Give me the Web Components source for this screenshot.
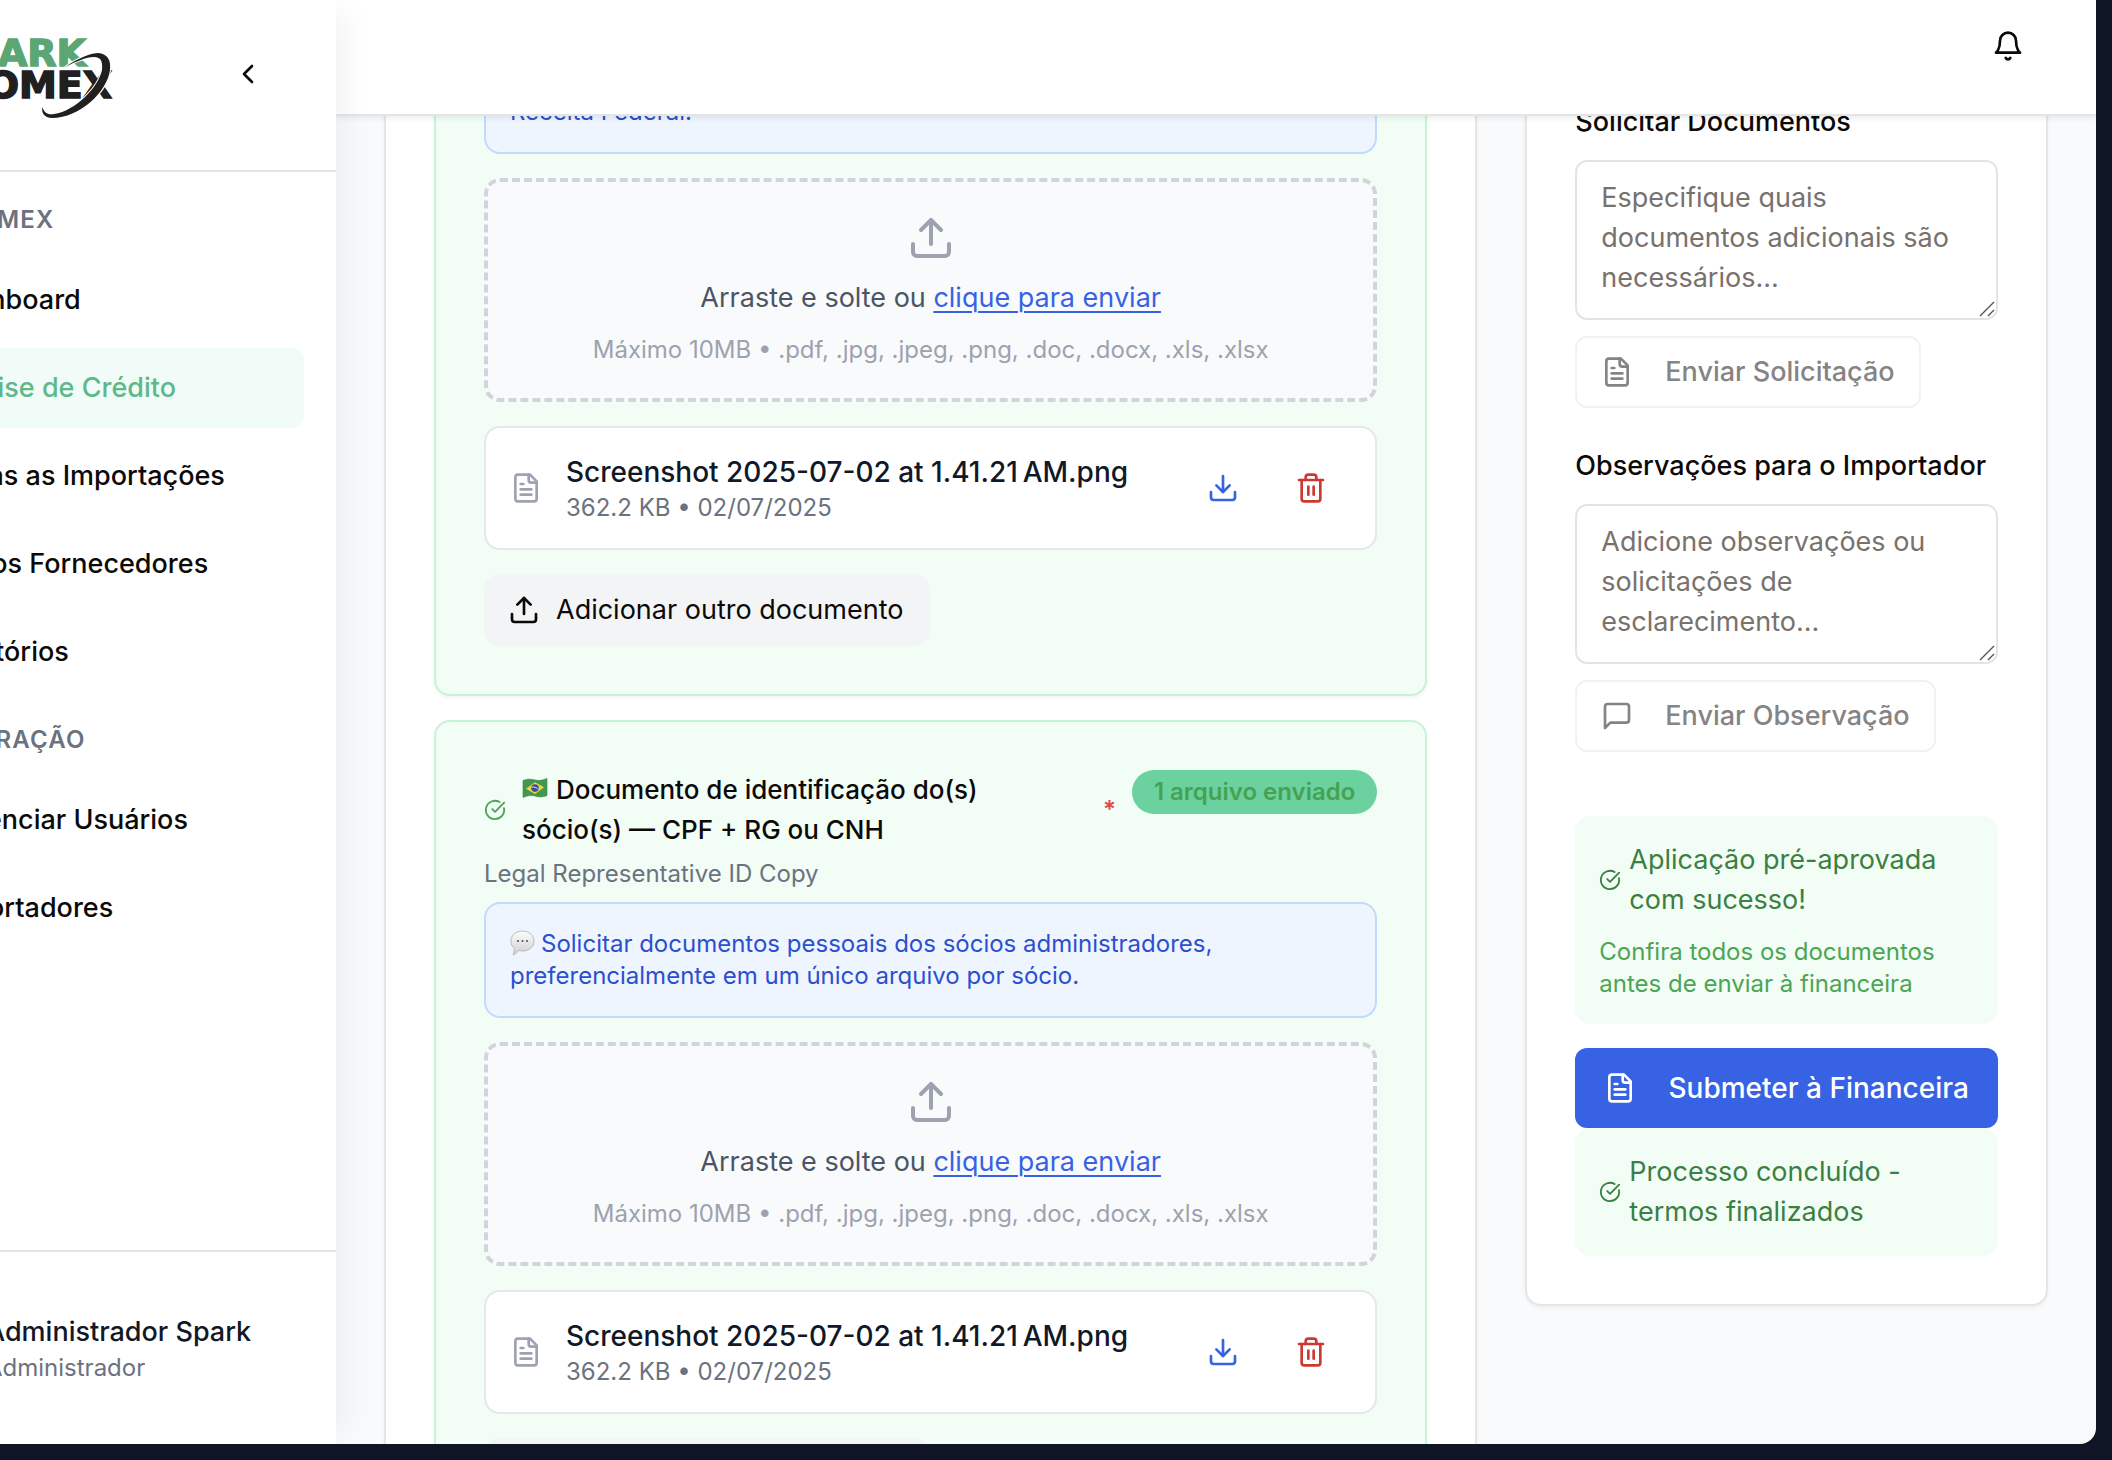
<!DOCTYPE html>
<html lang="pt-BR">
<head>
<meta charset="utf-8">
<title>Spark Comex — Análise de Crédito</title>
<style>
  :root {
    --font: Inter, "Liberation Sans", sans-serif;
    --text: 27px;
    --strong: 28px;
    --small: 24px;
    --ink: #0c0a09;
    --line: #e5e5e5;
    --canvas: #f9fafc;
    --mint: #f2fdf5;
  }
  html, body { height: 100%; margin: 0; }
  body {
    background: #0f1524; color: var(--ink); overflow: hidden;
    font: 400 var(--text)/40px var(--font);
    -webkit-font-smoothing: antialiased;
  }
</style>
</head>
<body>
<spark-app>
  <app-sidebar slot="sidebar">
    <nav-section label="SPARK COMEX">
      <nav-link>Dashboard</nav-link>
      <nav-link active>Análise de Crédito</nav-link>
      <nav-link>Todas as Importações</nav-link>
      <nav-link>Novos Fornecedores</nav-link>
      <nav-link>Relatórios</nav-link>
    </nav-section>
    <nav-section label="ADMINISTRAÇÃO">
      <nav-link>Gerenciar Usuários</nav-link>
      <nav-link>Importadores</nav-link>
    </nav-section>
    <user-card slot="user" name="Administrador Spark" role-name="Administrador"></user-card>
  </app-sidebar>
  <app-topbar slot="topbar"></app-topbar>

  <doc-list slot="main">
    <doc-card continued>
      <hint-note slot="note">Receita Federal.</hint-note>
      <drop-zone></drop-zone>
      <file-row name="Screenshot 2025-07-02 at 1.41.21&#8239;AM.png" meta="362.2 KB • 02/07/2025"></file-row>
      <add-button>Adicionar outro documento</add-button>
    </doc-card>
    <doc-card>
      <doc-heading slot="heading" subtitle="Legal Representative ID Copy" badge="1 arquivo enviado">Documento de identificação do(s)<br>sócio(s) — CPF + RG ou CNH</doc-heading>
      <hint-note slot="note" bubble>Solicitar documentos pessoais dos sócios administradores, preferencialmente em um único arquivo por sócio.</hint-note>
      <drop-zone></drop-zone>
      <file-row name="Screenshot 2025-07-02 at 1.41.21&#8239;AM.png" meta="362.2 KB • 02/07/2025"></file-row>
      <add-button></add-button>
    </doc-card>
  </doc-list>

  <review-panel slot="aside">
    <request-field label="Solicitar Documentos" placeholder="Especifique quais documentos adicionais são necessários..." icon="file" action="Enviar Solicitação"></request-field>
    <request-field label="Observações para o Importador" placeholder="Adicione observações ou solicitações de esclarecimento..." icon="message" action="Enviar Observação"></request-field>
    <status-box slot="status" detail="Confira todos os documentos antes de enviar à financeira">Aplicação pré-aprovada com sucesso!</status-box>
    <submit-button slot="status">Submeter à Financeira</submit-button>
    <status-box slot="done">Processo concluído - termos finalizados</status-box>
  </review-panel>
</spark-app>

<script>
const ICONS = {
  upload: '<path d="M21 15v4a2 2 0 0 1-2 2H5a2 2 0 0 1-2-2v-4"/><path d="m17 8-5-5-5 5"/><path d="M12 3v12"/>',
  download: '<path d="M21 15v4a2 2 0 0 1-2 2H5a2 2 0 0 1-2-2v-4"/><path d="m7 10 5 5 5-5"/><path d="M12 15V3"/>',
  file: '<path d="M15 2H6a2 2 0 0 0-2 2v16a2 2 0 0 0 2 2h12a2 2 0 0 0 2-2V7Z"/><path d="M14 2v4a2 2 0 0 0 2 2h4"/><path d="M10 9H8"/><path d="M16 13H8"/><path d="M16 17H8"/>',
  trash: '<path d="M3 6h18"/><path d="M19 6v14a2 2 0 0 1-2 2H7a2 2 0 0 1-2-2V6"/><path d="M8 6V4a2 2 0 0 1 2-2h4a2 2 0 0 1 2 2v2"/><path d="M10 11v6"/><path d="M14 11v6"/>',
  message: '<path d="M21 15a2 2 0 0 1-2 2H7l-4 4V5a2 2 0 0 1 2-2h14a2 2 0 0 1 2 2z"/>',
  check: '<path d="M21.8 10A10 10 0 1 1 17 3.34"/><path d="m9 11 3 3L22 4"/>',
  chevron: '<path d="m15 18-6-6 6-6"/>',
  bell: '<path d="M6 8a6 6 0 0 1 12 0c0 7 3 9 3 9H3s3-2 3-9"/><path d="M10.3 21a1.94 1.94 0 0 0 3.4 0"/>'
};
const icon = (name, size = 32) =>
  `<svg class="icon" width="${size}" height="${size}" viewBox="0 0 24 24" fill="none" stroke="currentColor" stroke-width="2" stroke-linecap="round" stroke-linejoin="round" aria-hidden="true">${ICONS[name]}</svg>`;

const BASE = `
  :host { display: block; box-sizing: border-box; }
  *, *::before, *::after { box-sizing: border-box; }
  .icon { display: block; flex: none; }
  button { font: inherit; color: inherit; background: none; border: 0; margin: 0; padding: 0; cursor: pointer; }
`;
function define(tag, css, html) {
  customElements.define(tag, class extends HTMLElement {
    constructor() {
      super();
      this.attachShadow({ mode: 'open' });
    }
    connectedCallback() {
      const markup = typeof html === 'function' ? html(this) : html;
      this.shadowRoot.innerHTML = `<style>${BASE}${css}</style>${markup}`;
    }
  });
}

define('spark-app', `
  :host { height: calc(100vh - 16px); margin-right: 16px; display: flex; overflow: hidden; background: var(--canvas); border-radius: 0 0 16px 0; }
  .side { flex: none; position: relative; z-index: 3; display: flex; }
  .page { flex: 1; min-width: 0; display: flex; flex-direction: column; }
  .view { flex: 1; min-height: 0; overflow: hidden; }
  .grid { display: grid; grid-template-columns: repeat(3, minmax(0, 1fr)); gap: 48px; padding: 0 48px; margin-top: -50px; align-items: start; }
  .main { grid-column: span 2; }
`, `
  <div class="side"><slot name="sidebar"></slot></div>
  <div class="page">
    <slot name="topbar"></slot>
    <main class="view"><div class="grid">
      <div class="main"><slot name="main"></slot></div>
      <slot name="aside"></slot>
    </div></main>
  </div>`);

define('app-sidebar', `
  :host { width: 512px; margin-left: -176px; background: #fff; display: flex; flex-direction: column;
    box-shadow: 20px 0 30px -10px rgba(0,0,0,.05); }
  header { height: 172px; border-bottom: 2px solid var(--line); padding: 26px 72px 0 128px; display: flex; justify-content: space-between; align-items: flex-start; }
  .logo { display: block; width: 216px; height: 104px; }
  .logo text { font-family: "DejaVu Sans", sans-serif; font-weight: 700; font-size: 38px; text-anchor: end; stroke-width: 1.5; }
  button { padding: 32px 0 0; }
  nav { flex: 1; padding: 32px 32px 0; display: flex; flex-direction: column; gap: 32px; }
  footer { height: 194px; border-top: 2px solid var(--line); padding: 60px 32px 0; }
`, `
  <header>
    <svg class="logo" viewBox="-48 26 216 104" role="img" aria-label="Spark Comex">
      <text x="86" y="66" fill="#5ba673" stroke="#5ba673">ARK</text>
      <text x="112" y="98" fill="#21201e" stroke="#21201e">OMEX</text>
      <path d="M65 67C80 57 92 53 98 53C108 54 111 60 110 70C107 92 80 118 52 118C44 118 41 112 42.500 107C44 113 48 115 54 114C76 111 99 86 102 70C103 60 100 57 94 57C86 57 75 62 65 67Z" fill="#21201e" stroke="#fff" stroke-width="2" paint-order="stroke"/>
    </svg>
    <button type="button" aria-label="Recolher menu">${icon('chevron')}</button>
  </header>
  <nav><slot></slot></nav>
  <footer><slot name="user"></slot></footer>`);

define('nav-section', `
  h2 { margin: 0 0 24px; padding-left: 10px; font-size: var(--small); line-height: 32px; font-weight: 600; letter-spacing: .05em; color: #6b7280; }
  .links { display: flex; flex-direction: column; gap: 8px; }
`, el => `<h2>${el.getAttribute('label')}</h2><div class="links"><slot></slot></div>`);

define('nav-link', `
  a { display: block; padding: 20px 24px 20px 84px; border-radius: 12px; color: inherit; text-decoration: none; font-weight: 500; white-space: nowrap; }
  :host([active]) a { background: #f1fbf7; color: #5fb88a; }
`, `<a href="#"><slot></slot></a>`);

define('user-card', `
  :host { padding-left: 130px; white-space: nowrap; }
  p { margin: 0; }
  .name { color: #111827; font-weight: 500; }
  .role { color: #6b7280; font-size: var(--small); line-height: 32px; }
`, el => `<p class="name">${el.getAttribute('name')}</p><p class="role">${el.getAttribute('role-name')}</p>`);

define('app-topbar', `
  :host { position: relative; z-index: 2; height: 116px; flex: none; background: #fff; border-bottom: 2px solid var(--line);
    box-shadow: 0 2px 6px rgba(0,0,0,.08); padding: 30px 72px 0; display: flex; justify-content: flex-end; align-items: flex-start; }
`, `<button type="button" aria-label="Notificações">${icon('bell')}</button>`);

define('doc-list', `
  :host { border: 2px solid var(--line); border-radius: 16px; background: #fff; padding: 0 48px 48px; display: flex; flex-direction: column; gap: 24px; box-shadow: 0 2px 4px rgba(0,0,0,.05); }
`, `<slot></slot>`);

define('doc-card', `
  :host { border: 2px solid #c6f3d6; border-radius: 16px; background: var(--mint); padding: 48px; display: flex; flex-direction: column; gap: 24px; box-shadow: 0 2px 4px rgba(0,0,0,.05); }
  :host([continued]) { padding-top: 0; }
  .intro { display: flex; flex-direction: column; gap: 12px; }
`, `<div class="intro"><slot name="heading"></slot><slot name="note"></slot></div><slot></slot>`);

const FLAG = `<svg class="flag" width="26" height="21" viewBox="0 0 26 21" role="img" aria-label="Brasil">
  <path d="M1 2.500C6 .5 9 1 13 2S20 2.500 25 .5V17.500C20 19.500 17 19 13 18S6 17.500 1 19.500Z" fill="#3f9a50" stroke="#3b8045" stroke-width=".6"/>
  <path d="M13 4.200 22 9.200 13 16 4 10.800Z" fill="#f4d341"/>
  <circle cx="13" cy="10.100" r="3.800" fill="#3a4f9c"/>
  <path d="M9.600 9.200C12 8.500 14.500 9.500 16.200 11.400" fill="none" stroke="#e8eefa" stroke-width=".9"/></svg>`;
const BUBBLE = `<svg class="bubble" width="25" height="26" viewBox="0 0 25 26" aria-hidden="true">
  <defs><linearGradient id="g" x2="0" y2="1"><stop offset="0" stop-color="#fdfdfd"/><stop offset="1" stop-color="#cfcfd2"/></linearGradient></defs>
  <path d="M12.500 1C19 1 24 5.200 24 11S19 21 12.500 21C11 21 9.600 20.800 8.300 20.400C7 22.500 5 24.600 3 25C4 23 4.300 21 4.200 18.300C2 16.500.9 14 .9 11C.9 5.200 6 1 12.500 1Z" fill="url(#g)" stroke="#b4b4b8" stroke-width=".9"/>
  <g fill="#55555a"><circle cx="8" cy="11" r="1.100"/><circle cx="12.500" cy="11" r="1.100"/><circle cx="17" cy="11" r="1.100"/></g></svg>`;

define('doc-heading', `
  .row { display: flex; align-items: flex-start; gap: 16px; }
  .title { flex: 1; min-width: 0; display: flex; align-items: center; gap: 16px; }
  .title .icon { color: #4ba554; }
  h3 { flex: 1; margin: 0; font-size: 26px; line-height: 40px; font-weight: 500; }
  .flag { margin-right: 8px; }
  .req { color: #e0484a; font-size: var(--small); line-height: 32px; font-weight: 600; }
  .badge { flex: none; background: #6bd19f; color: #46a252; border-radius: 22px; padding: 6px 22px; font-size: var(--small); line-height: 32px; font-weight: 600; }
  .sub { margin: 8px 0 0; color: #6b7280; font-size: var(--small); line-height: 32px; }
`, el => `
  <div class="row">
    <div class="title">${icon('check', 22)}<h3>${FLAG}<slot></slot></h3><span class="req">*</span></div>
    <span class="badge">${el.getAttribute('badge')}</span>
  </div>
  <p class="sub">${el.getAttribute('subtitle')}</p>`);

define('hint-note', `
  :host { border: 2px solid #c1d9fd; border-radius: 16px; background: #eef5fe; color: #2c4fd0; padding: 24px; font-size: var(--small); line-height: 32px; }
  .bubble { margin-right: 6px; vertical-align: -4px; }
`, el => `${el.hasAttribute('bubble') ? BUBBLE : ''}<slot></slot>`);

define('drop-zone', `
  :host { border: 4px dashed #d1d5db; border-radius: 16px; background: var(--canvas); padding: 32px; display: flex; flex-direction: column; align-items: center; gap: 16px; }
  .icon { color: #9ca3af; }
  p { margin: 0; color: #4b5563; }
  a { color: #3862e4; text-decoration: underline; text-underline-offset: 4px; text-decoration-thickness: 2px; }
  .limits { color: #9ca3af; font-size: var(--small); line-height: 32px; }
`, `${icon('upload', 48)}
  <p>Arraste e solte ou <a href="#">clique para enviar</a></p>
  <p class="limits">Máximo 10MB • .pdf, .jpg, .jpeg, .png, .doc, .docx, .xls, .xlsx</p>`);

define('file-row', `
  :host { border: 2px solid #e5e7eb; border-radius: 16px; background: #fff; padding: 24px; display: flex; align-items: center; gap: 24px; }
  .icon { color: inherit; }
  .type { color: #9ca3af; }
  .info { flex: 1; min-width: 0; }
  p { margin: 0; }
  .name { color: #111827; font-size: var(--strong); font-weight: 500; }
  .meta { color: #6b7280; font-size: var(--small); line-height: 32px; }
  .actions { display: flex; gap: 8px; }
  button { padding: 20px 24px; }
  .get { color: #3862e4; }
  .del { color: #cb3a31; }
`, el => `
  <span class="type">${icon('file')}</span>
  <div class="info"><p class="name">${el.getAttribute('name')}</p><p class="meta">${el.getAttribute('meta')}</p></div>
  <div class="actions">
    <button type="button" class="get" aria-label="Baixar">${icon('download')}</button>
    <button type="button" class="del" aria-label="Excluir">${icon('trash')}</button>
  </div>`);

define('add-button', `
  :host { display: flex; }
  button { display: flex; align-items: center; gap: 16px; min-width: 446px; height: 72px; padding: 0 24px; border-radius: 16px; background: #f3f4f6; }
`, `<button type="button" aria-label="Adicionar outro documento">${icon('upload')}<slot></slot></button>`);

define('review-panel', `
  :host { border: 2px solid var(--line); border-radius: 16px; background: #fff; padding: 40px 48px 48px; box-shadow: 0 2px 4px rgba(0,0,0,.05); }
  .fields { display: flex; flex-direction: column; gap: 44px; margin-bottom: 64px; }
  .status { display: flex; flex-direction: column; gap: 24px; }
`, `
  <div class="fields"><slot></slot></div>
  <div class="status"><slot name="status"></slot></div>
  <slot name="done"></slot>`);

define('request-field', `
  label { display: block; font-weight: 500; line-height: 28px; margin-bottom: 24px; white-space: nowrap; }
  .box { position: relative; margin-bottom: 16px; }
  textarea { display: block; width: 100%; height: 160px; padding: 16px 24px; border: 2px solid #e4e4e4; border-radius: 12px; background: #fff; color: inherit; font: inherit; resize: none; overflow: hidden; outline: none; }
  textarea::placeholder { color: #78716c; opacity: 1; }
  .grip { position: absolute; right: 3px; bottom: 3px; }
  button { display: inline-flex; align-items: center; gap: 32px; height: 72px; padding: 0 24px; border: 2px solid #f2f2f2; border-radius: 12px; color: #858484; font-weight: 500; vertical-align: top; white-space: nowrap; }
`, el => `
  <label for="t">${el.getAttribute('label')}</label>
  <div class="box">
    <textarea id="t" placeholder="${el.getAttribute('placeholder')}"></textarea>
    <svg class="grip" width="16" height="16" viewBox="0 0 16 16" stroke="#555" stroke-width="1.400" aria-hidden="true"><path d="M1 15 15 1M9 15 15 9"/></svg>
  </div>
  <button type="button" disabled>${icon(el.getAttribute('icon'))}${el.getAttribute('action')}</button>`);

define('status-box', `
  :host { border-radius: 16px; background: var(--mint); padding: 24px; }
  .row { display: flex; align-items: center; gap: 8px; color: #3b7f43; }
  p { margin: 16px 0 0; color: #4ba554; font-size: var(--small); line-height: 32px; }
`, el => `
  <div class="row">${icon('check', 22)}<span><slot></slot></span></div>
  ${el.hasAttribute('detail') ? `<p>${el.getAttribute('detail')}</p>` : ''}`);

define('submit-button', `
  button { width: 100%; height: 80px; border-radius: 12px; background: #3862e4; color: #fff; font-size: var(--strong); font-weight: 500; display: flex; align-items: center; justify-content: center; gap: 32px; white-space: nowrap; }
`, `<button type="button">${icon('file')}<slot></slot></button>`);
</script>
</body>
</html>
